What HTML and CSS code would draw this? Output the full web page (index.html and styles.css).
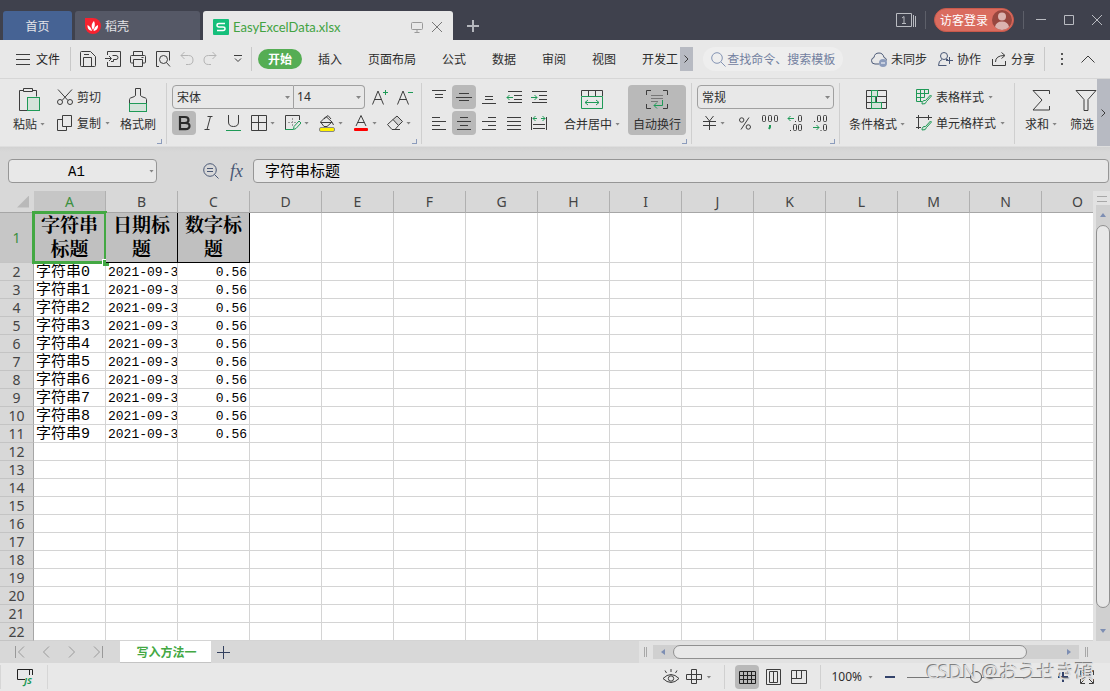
FILE: index.html
```html
<!DOCTYPE html>
<html lang="zh-CN">
<head>
<meta charset="utf-8">
<title>EasyExcelData.xlsx</title>
<link rel="stylesheet" href="styles.css">
</head>
<body>
<header class="titlebar">
  <nav class="doc-tabs">
    <button class="doc-tab home">首页</button>
    <button class="doc-tab docer">
      <svg width="16" height="16" viewBox="0 0 16 16"><path d="M0 0h8a8 8 0 1 1-8 8z" fill="#f8222f"/><path d="M7 13C2.500 12 2.500 9 2.500 7c2 1 4 3 4.500 6zM8 12C5.500 8 7 5 9 3c1.500 3 1 6-1 9zM8.500 13c.5-3 2-5 4.500-6 .3 3-1 5.500-4.500 6z" fill="#fff"/></svg>
      <span>稻壳</span>
    </button>
    <div class="doc-tab active">
      <svg width="16" height="16" viewBox="0 0 16 16"><rect width="16" height="16" rx="1" fill="#15bf7b"/><path d="M12 4.500H6Q4 4.500 4 6.200T6 8h4q2 0 2 1.700t-2 1.800H4" fill="none" stroke="#fff" stroke-width="1.500"/></svg>
      <span class="doc-name">EasyExcelData.xlsx</span>
      <button class="plain" aria-label="显示"><svg width="12" height="12" viewBox="0 0 12 12" class="line muted"><path d="M1.500 1.500h9q1 0 1 1v5q0 1-1 1h-9q-1 0-1-1v-5q0-1 1-1zM6 9v2M3.500 11.500h5"/></svg></button>
      <button class="plain" aria-label="关闭标签"><svg width="12" height="12" viewBox="0 0 12 12" class="line gray"><path d="M1 1l10 10M11 1L1 11"/></svg></button>
    </div>
    <button class="new-doc" aria-label="新建"><svg width="12" height="12" viewBox="0 0 12 12"><path d="M6 0v12M0 6h12" stroke="#b5b7bd" stroke-width="2"/></svg></button>
  </nav>
  <div class="window-tools">
    <button class="plain" aria-label="窗口"><svg width="20" height="14" viewBox="0 0 20 14" class="line light"><path d="M.5.5h15v13H.5zM17.500 2v12M19.500 3v11M6 5l2-1.500v7M6 10.500h4"/></svg></button>
    <i class="title-sep"></i>
    <button class="login"><span>访客登录</span><svg width="20" height="20" viewBox="0 0 20 20"><circle cx="10" cy="10" r="10" fill="#98473f"/><circle cx="10" cy="6.500" r="4" fill="#dbb3af"/><path d="M3 17q1-5.500 7-5.500T17 17q-3 3-7 3t-7-3z" fill="#dbb3af"/></svg></button>
    <i class="title-sep"></i>
    <button class="plain win" aria-label="最小化"><svg width="10" height="10" viewBox="0 0 10 10" class="line light"><path d="M0 4.500h10"/></svg></button>
    <button class="plain win" aria-label="最大化"><svg width="10" height="10" viewBox="0 0 10 10" class="line light"><path d="M.5.5h9v9h-9z"/></svg></button>
    <button class="plain win" aria-label="关闭"><svg width="10" height="10" viewBox="0 0 10 10" class="line light"><path d="M0 0l10 10M10 0L0 10"/></svg></button>
  </div>
</header>

<div class="menubar">
  <button class="plain file"><svg width="14" height="11" viewBox="0 0 14 11" class="line"><path d="M0 .5h14M0 5.500h14M0 10.500h14"/></svg><span>文件</span></button>
  <i class="menu-sep"></i>
  <div class="quick">
    <button class="plain" aria-label="保存"><svg width="16" height="16" viewBox="0 0 16 16" class="line"><path d="M1.500.5h9l5 5v9q0 1-1 1h-13q-1 0-1-1v-13q0-1 1-1zM3.500 15V6.500h8V15M4 3.500h5"/></svg></button>
    <button class="plain" aria-label="输出为PDF"><svg width="16" height="16" viewBox="0 0 16 16" class="line"><path d="M2.500 4V.5h13v15h-13V11M0 7.500h6M4 5l2.500 2.500L4 10M7.500 4.500h3.500q2 0 2 2t-2 2H8.500v2H6"/></svg></button>
    <button class="plain" aria-label="打印"><svg width="16" height="16" viewBox="0 0 16 16" class="line"><path d="M3.500 4V.5h9V4M3.500 12h-2q-1 0-1-1V5.500q0-1 1-1h13q1 0 1 1V11q0 1-1 1h-2M3.500 8.500h9v7h-9zM11.500 6.500h2"/></svg></button>
    <button class="plain" aria-label="打印预览"><svg width="16" height="16" viewBox="0 0 16 16" class="line"><path d="M4 15.500H1.500V.5h13v9"/><circle cx="8.500" cy="8.500" r="4"/><path d="M11.500 11.500l3.500 4"/></svg></button>
    <button class="plain" aria-label="撤销"><svg width="14" height="16" viewBox="0 0 14 16" class="line pale"><path d="M4.500 1L1 4.500 4.500 8M1 4.500h7.500q4.500 0 4.500 4.500t-4.500 4.500H6"/></svg></button>
    <button class="plain" aria-label="恢复"><svg width="14" height="16" viewBox="0 0 14 16" class="line pale"><path d="M9.500 1L13 4.500 9.500 8M13 4.500H5.500Q1 4.500 1 9t4.500 4.500H8"/></svg></button>
    <button class="plain more" aria-label="更多"><svg width="8" height="8" viewBox="0 0 8 8" class="line"><path d="M0 .5h8M1 3.500l3 3 3-3"/></svg></button>
  </div>
  <i class="menu-sep"></i>
  <nav class="tabs">
    <button class="plain start">开始</button>
    <button class="plain">插入</button>
    <button class="plain">页面布局</button>
    <button class="plain">公式</button>
    <button class="plain">数据</button>
    <button class="plain">审阅</button>
    <button class="plain">视图</button>
    <button class="plain">开发工</button>
  </nav>
  <button class="tab-next" aria-label="更多选项卡"><svg width="5" height="8" viewBox="0 0 5 8" class="line"><path d="M.5.5L4 4 .5 7.500"/></svg></button>
  <label class="search"><svg width="15" height="15" viewBox="0 0 15 15" class="line blue"><circle cx="6" cy="6" r="5.300"/><path d="M10 10l4.500 4.500"/></svg><input type="text" aria-label="搜索" placeholder="查找命令、搜索模板"></label>
  <div class="account">
    <button class="plain"><svg width="16" height="16" viewBox="0 0 16 16" class="line slate"><path d="M8 13H4Q.5 13 .5 9.700.5 7 3 6.500 3.500 2 8 2q4 0 5 4.500 2.500.5 2.500 3"/><circle cx="12" cy="12" r="4" fill="#8c9cbc" stroke="none"/><path d="M10 12h4" stroke="#fff"/></svg><span>未同步</span></button>
    <button class="plain"><svg width="15" height="14" viewBox="0 0 15 14" class="line slate"><circle cx="6" cy="4" r="3.500"/><path d="M4 7.500Q.5 8.500.5 13.500H8.500M8 7.500h2M11.500 5v7M8 8.500h7"/></svg><span>协作</span></button>
    <button class="plain"><svg width="15" height="14" viewBox="0 0 15 14" class="line"><path d="M.5 7v6.500h13V9M3.500 10q0-6.500 9-6.500M9.500.5l3.500 3-3.500 3"/></svg><span>分享</span></button>
  </div>
  <i class="menu-sep"></i>
  <button class="plain dots" aria-label="菜单"><svg width="2" height="12" viewBox="0 0 2 12"><path d="M0 0h2v2H0zM0 5h2v2H0zM0 10h2v2H0z" fill="#555"/></svg></button>
  <button class="plain fold" aria-label="折叠"><svg width="14" height="8" viewBox="0 0 14 8" class="line"><path d="M.5 7.500L7 1l6.500 6.500"/></svg></button>
</div>

<div class="ribbon">
  <div class="groups">
    <section class="group clipboard">
      <button class="big"><svg width="24" height="24" viewBox="0 0 24 24" class="line"><path d="M6.500 2.500h-4v20h9M15.500 2.500h4v6M6.500.5h9v3h-9z"/><rect x="10.500" y="9.500" width="12" height="13" fill="#d5e3da" stroke="#1f9a57"/></svg><span class="label">粘贴<i class="caret"></i></span></button>
      <div class="stack">
        <button class="small"><svg width="16" height="16" viewBox="0 0 16 16" class="line"><path d="M1 .5l10 11M15 .5l-10 11"/><circle cx="3" cy="13" r="2.500"/><circle cx="13" cy="13" r="2.500"/></svg><span>剪切</span></button>
        <button class="small"><svg width="16" height="16" viewBox="0 0 16 16" class="line"><path d="M5.500.5h9v11h-9zM5.500 4.500h-5v11h9v-4"/></svg><span>复制</span><i class="caret"></i></button>
      </div>
      <button class="big"><svg width="20" height="24" viewBox="0 0 20 24" class="line"><path d="M1.500 15.500V11.500q0-1 1-1.500l4-1.500q1-.5 1-1.500V.5h5V7q0 1 1 1.500l4 1.500q1 .5 1 1.500v4"/><rect x="1.500" y="15.500" width="17" height="8" fill="#d5e3da" stroke="#1f9a57"/></svg><span class="label">格式刷</span></button>
      <i class="corner"></i>
    </section>
    <section class="group font">
      <div class="stack">
        <div class="row">
          <span class="combo name"><select aria-label="字体"><option>宋体</option></select></span>
          <span class="combo size"><select aria-label="字号"><option>14</option></select></span>
          <button class="tool grow" aria-label="增大字号"><svg width="16" height="16" viewBox="0 0 16 16" class="line"><path d="M.5 15.500L6 2l5.500 13.500M2.500 10.500h7"/><path d="M13.500 1v5M11 3.500h5" stroke="#1f9a57"/></svg></button>
          <button class="tool" aria-label="减小字号"><svg width="16" height="16" viewBox="0 0 16 16" class="line"><path d="M.5 15.500L6 2l5.500 13.500M2.500 10.500h7"/><path d="M11 3.500h5" stroke="#1f9a57"/></svg></button>
        </div>
        <div class="row">
          <button class="tool on" aria-label="加粗"><svg width="14" height="16" viewBox="0 0 14 16"><path d="M3 2h5q3.500 0 3.500 3T8 8H3zM3 8h5.500q4 0 4 3t-4 3.200H3z" fill="none" stroke="#2b2b2b" stroke-width="2.200"/></svg></button>
          <button class="tool" aria-label="倾斜"><svg width="10" height="16" viewBox="0 0 10 16" class="line"><path d="M3.500 1.500h5M.5 14.500h5M6.500 1.500l-3.500 13"/></svg></button>
          <button class="tool" aria-label="下划线"><svg width="16" height="16" viewBox="0 0 16 16" class="line"><path d="M2.500 0v7q0 4.500 5 4.500t5-4.500V0"/><path d="M0 15.500h15" stroke="#1f9a57"/></svg></button>
          <button class="split" aria-label="边框"><svg width="16" height="16" viewBox="0 0 16 16" class="line"><path d="M.5.5h15v15H.5zM7.500.5v15M.5 7.500h15"/></svg><i class="caret"></i></button>
          <button class="split" aria-label="绘图边框"><svg width="16" height="16" viewBox="0 0 16 16" class="line"><path d="M.5 15V.5h14V5"/><path d="M3 7.500h9M7.500 3v9" stroke="#999" stroke-dasharray="2 1"/><path d="M0 14.500h8M8.500 14.500l.5-3L14 6l2 2-5 5.500z" stroke="#1f9a57"/></svg><i class="caret"></i></button>
          <button class="split" aria-label="填充颜色"><svg width="16" height="17" viewBox="0 0 16 17" class="line"><path d="M1.500 7L7 1.500l6 5.500-5 4.500H5zM5 4L9 .5l3 3.500M1.500 7.500h11M13 7l1.500 3"/><rect x="0.500" y="12.500" width="15" height="4" rx="1.500" fill="#fff200" stroke="#888"/></svg><i class="caret"></i></button>
          <button class="split" aria-label="字体颜色"><svg width="16" height="17" viewBox="0 0 16 17" class="line"><path d="M3 11L8 .5l5 10.500M4.500 7.500h7"/><rect x="1" y="13" width="14" height="3" rx="1" fill="#f00" stroke="none"/></svg><i class="caret"></i></button>
          <button class="split" aria-label="清除"><svg width="16" height="16" viewBox="0 0 16 16" class="line"><path d="M6 4.500l4-3.500 5.500 5.500-4 4z" fill="#d0d0d0"/><path d="M6 4.500L.5 9.500l4.500 5h3l3.500-4M5 14.500h8"/></svg><i class="caret"></i></button>
        </div>
      </div>
      <i class="corner"></i>
    </section>
    <section class="group align">
      <div class="stack">
        <div class="row">
          <button class="tool" aria-label="顶端对齐"><svg width="14" height="16" viewBox="0 0 14 16" class="line"><path d="M0 1.500h14M3 5.500h8M3 8.500h8"/></svg></button>
          <button class="tool on" aria-label="垂直居中"><svg width="16" height="16" viewBox="0 0 16 16" class="line"><path d="M3 4.500h10M0 8.500h16M3 11.500h10"/></svg></button>
          <button class="tool" aria-label="底端对齐"><svg width="14" height="16" viewBox="0 0 14 16" class="line"><path d="M3 7.500h8M3 10.500h8M0 14.500h14"/></svg></button>
          <button class="tool" aria-label="减少缩进"><svg width="16" height="16" viewBox="0 0 16 16" class="line"><path d="M2 2.500h14M8 6.500h8M8 10.500h8M2 13.500h14"/><path d="M7 8.500H1M3.500 6L1 8.500 3.500 11" stroke="#1f9a57"/></svg></button>
          <button class="tool" aria-label="增加缩进"><svg width="16" height="16" viewBox="0 0 16 16" class="line"><path d="M1 2.500h15M8 6.500h8M8 10.500h8M1 13.500h15"/><path d="M0 8.500h6M3.500 6L6 8.500 3.500 11" stroke="#1f9a57"/></svg></button>
        </div>
        <div class="row">
          <button class="tool" aria-label="左对齐"><svg width="14" height="14" viewBox="0 0 14 14" class="line"><path d="M0 1.500h8M0 5.500h14M0 9.500h8M0 13.500h14"/></svg></button>
          <button class="tool on" aria-label="水平居中"><svg width="14" height="14" viewBox="0 0 14 14" class="line"><path d="M3 1.500h8M0 5.500h14M3 9.500h8M0 13.500h14"/></svg></button>
          <button class="tool" aria-label="右对齐"><svg width="14" height="14" viewBox="0 0 14 14" class="line"><path d="M6 1.500h8M0 5.500h14M6 9.500h8M0 13.500h14"/></svg></button>
          <button class="tool" aria-label="两端对齐"><svg width="14" height="14" viewBox="0 0 14 14" class="line"><path d="M0 1.500h14M0 5.500h14M0 9.500h14M0 13.500h14"/></svg></button>
          <button class="tool" aria-label="分散对齐"><svg width="16" height="16" viewBox="0 0 16 16" class="line"><path d="M.5 2v13M15.500 2v13M2 9.500h12M2 13.500h12"/><path d="M2 3.500h4M4.500 1L2 3.500 4.500 6M10 3.500h4M11.500 1L14 3.500 11.500 6" stroke="#1f9a57"/></svg></button>
        </div>
      </div>
      <button class="big merge"><svg width="22" height="20" viewBox="0 0 22 20" class="line"><path d="M.5 6V.5h21V6M7.500 1v5M14.500 1v5"/><path d="M.5 6.500h21v12H.5zM4 12.500h14M7 10l-3 2.500L7 15M15 10l3 2.500-3 2.500" stroke="#1f9a57"/></svg><span class="label">合并居中<i class="caret"></i></span></button>
      <button class="big wrap"><svg width="22" height="20" viewBox="0 0 22 20" class="line"><path d="M.5 5V.5H5M17 .5h4.500V5M.5 14v4.500H5M17 18.500h4.500V14"/><path d="M5 5.500h12M5 8.500h12M5 11.500h7" stroke="#777"/><path d="M16.500 10v5.500H8M11 12.500l-3 3 3 3" stroke="#1f9a57"/></svg><span class="label">自动换行</span></button>
      <i class="corner"></i>
    </section>
    <section class="group number">
      <div class="stack">
        <span class="combo format"><select aria-label="数字格式"><option>常规</option></select></span>
        <div class="row formats">
          <button class="split" aria-label="货币"><svg width="15" height="14" viewBox="0 0 15 14" class="line"><path d="M3.500 0l4 5 4-5M1 5.500h13M1 9.500h13M7.500 5v9"/></svg><i class="caret"></i></button>
          <button class="tool" aria-label="百分比"><svg width="12" height="13" viewBox="0 0 12 13" class="line"><circle cx="2.700" cy="3" r="2.200"/><circle cx="9.300" cy="10" r="2.200"/><path d="M10 .5L2 12.500"/></svg></button>
          <button class="tool" aria-label="千位分隔"><svg width="16" height="16" viewBox="0 0 16 16" class="line"><rect x=".5" y=".5" width="3" height="6" rx="1"/><rect x="6.500" y=".5" width="3" height="6" rx="1"/><rect x="12.500" y=".5" width="3" height="6" rx="1"/><path d="M8 10v2l-1 2" stroke="#1f9a57" stroke-width="2"/></svg></button>
          <button class="tool" aria-label="增加小数"><svg width="16" height="16" viewBox="0 0 16 16" class="line"><path d="M7 3.500H1M3.500 1L1 3.500 3.500 6" stroke="#1f9a57"/><rect x="11.500" y=".5" width="3" height="6" rx="1"/><rect x="6.500" y="9.500" width="3" height="6" rx="1"/><rect x="11.500" y="9.500" width="3" height="6" rx="1"/><path d="M8 6.500h1M3 15.500h1"/></svg></button>
          <button class="tool" aria-label="减少小数"><svg width="16" height="16" viewBox="0 0 16 16" class="line"><rect x="5.500" y=".5" width="3" height="6" rx="1"/><rect x="11.500" y=".5" width="3" height="6" rx="1"/><rect x="11.500" y="9.500" width="3" height="6" rx="1"/><path d="M2 6.500h1M8.500 15.500h1"/><path d="M1 12.500h6M4.500 10L7 12.500 4.500 15" stroke="#1f9a57"/></svg></button>
        </div>
      </div>
      <i class="corner"></i>
    </section>
    <section class="group styles">
      <button class="big"><svg width="22" height="20" viewBox="0 0 22 20" class="line"><path d="M.5.5h20v18H.5zM.5 6.500h20M.5 12.500h20M10.500.5v18"/><path d="M5.500 0v19M5.500.5h6v6h-6zM5.500 6.500h4v6h-4zM5.500 12.500h10v6h-10z" fill="#d5e3da" stroke="#1f9a57"/></svg><span class="label">条件格式<i class="caret"></i></span></button>
      <div class="stack">
        <button class="small"><svg width="16" height="16" viewBox="0 0 16 16" class="line"><path d="M12.500 4V.5"/><path d="M6 12.500H.5V.5h12V5M.5 4.500h12M.5 8.500h8M4.500.5v12M8.500.5v8M6 15q0-4 3.500-3.500L14.500 6l1 1-5 5.500Q10 15.500 6 15z" stroke="#1f9a57"/></svg><span>表格样式</span><i class="caret"></i></button>
        <button class="small"><svg width="16" height="16" viewBox="0 0 16 16" class="line"><path d="M0 2.500h16M2.500 0v14M12.500 0v5M0 12.500h5"/><path d="M6 15q0-4 3.500-3.500L14.500 6l1 1-5 5.500Q10 15.500 6 15z" fill="#d5e3da" stroke="#1f9a57"/></svg><span>单元格样式</span><i class="caret"></i></button>
      </div>
    </section>
    <section class="group edit">
      <button class="big"><svg width="18" height="21" viewBox="0 0 18 21" class="line"><path d="M17.500 4V.5H1l9 9.500-9 10h16.500V16"/></svg><span class="label">求和<i class="caret"></i></span></button>
      <button class="big"><svg width="22" height="21" viewBox="0 0 22 21" class="line"><path d="M1 .5h20l-8 9v11H9v-11z"/></svg><span class="label">筛选<i class="caret"></i></span></button>
    </section>
  </div>
  <button class="ribbon-next" aria-label="更多工具"><svg width="5" height="8" viewBox="0 0 5 8" class="line"><path d="M.5.5L4 4 .5 7.500"/></svg></button>
</div>

<div class="formula-bar">
  <span class="name-box"><input type="text" value="A1" aria-label="名称框"><i class="caret"></i></span>
  <div class="fx">
    <button class="plain" aria-label="查找"><svg width="16" height="16" viewBox="0 0 16 16" class="line slate"><circle cx="7" cy="7" r="6.300"/><path d="M11.500 11.500l4 4M4 5.500h6M4 8.500h6"/></svg></button>
    <button class="plain fx-label">fx</button>
  </div>
  <input class="formula" type="text" value="字符串标题" aria-label="编辑栏">
</div>

<main class="sheet">
  <div class="grid-view">
    <table class="grid" id="grid"></table>
  </div>
  <div class="vscroll">
    <i class="split-handle"></i>
    <div class="vtrack">
      <button class="plain" aria-label="向上"><i class="tri up"></i></button>
      <div class="vthumb"></div>
      <button class="plain" aria-label="向下"><i class="tri down"></i></button>
    </div>
  </div>
</main>

<div class="sheet-bar">
  <div class="sheet-nav">
    <button class="plain" aria-label="第一个"><svg width="10" height="12" viewBox="0 0 10 12" class="line muted"><path d="M.5 0v12M9 .5L3.500 6 9 11.500"/></svg></button>
    <button class="plain" aria-label="上一个"><svg width="10" height="12" viewBox="0 0 10 12" class="line muted"><path d="M8 .5L2.500 6 8 11.500"/></svg></button>
    <button class="plain" aria-label="下一个"><svg width="10" height="12" viewBox="0 0 10 12" class="line muted"><path d="M2 .5L7.500 6 2 11.500"/></svg></button>
    <button class="plain" aria-label="最后一个"><svg width="10" height="12" viewBox="0 0 10 12" class="line muted"><path d="M1 .5L6.500 6 1 11.500M9.500 0v12"/></svg></button>
  </div>
  <button class="sheet-tab">写入方法一</button>
  <button class="plain add-sheet" aria-label="新建工作表"><svg width="13" height="13" viewBox="0 0 13 13" class="line navy"><path d="M6.500 0v13M0 6.500h13"/></svg></button>
  <div class="hscroll">
    <i class="grip"></i>
    <div class="htrack">
      <button class="plain" aria-label="向左"><i class="tri left"></i></button>
      <div class="hthumb"></div>
      <button class="plain end" aria-label="向右"><i class="tri right"></i></button>
    </div>
    <i class="grip"></i>
  </div>
</div>

<footer class="status">
  <button class="plain macro"><svg width="17" height="12" viewBox="0 0 17 12" class="line"><path d="M8 10.500H.5V.5h13M12.500 6V.5h3V6" stroke="#222"/></svg><span>JS</span></button>
  <div class="views">
    <button class="plain" aria-label="护眼模式"><svg width="16" height="16" viewBox="0 0 16 16" class="line"><path d="M0 9.500Q8 1.500 16 9.500 8 17.500 0 9.500zM8 3V0M3.500 4L2 1.500M12.500 4L14 1.500"/><circle cx="8" cy="9.500" r="2.700"/></svg></button>
    <button class="plain reading" aria-label="阅读模式"><svg width="16" height="16" viewBox="0 0 16 16" class="line"><path d="M5.500.5h5v14h-5zM.5 5.500h15v5H.5z"/></svg><i class="caret"></i></button>
    <i class="status-sep"></i>
    <button class="tool on" aria-label="普通视图"><svg width="17" height="13" viewBox="0 0 17 13" class="line"><path d="M.5.5h16v12H.5zM.5 4.500h16M.5 8.500h16M4.500.5v12M8.500.5v12M12.500.5v12" stroke="#222"/></svg></button>
    <button class="plain view" aria-label="页面布局视图"><svg width="15" height="16" viewBox="0 0 15 16" class="line"><path d="M.5.5h14v15H.5zM3.500 2.500h8v11h-8zM7.500 2.500v11"/></svg></button>
    <button class="plain view" aria-label="分页预览"><svg width="16" height="14" viewBox="0 0 16 14" class="line"><path d="M.5.5h15v13H.5zM5.500.5v8M.5 8.500h10v-8"/></svg></button>
    <i class="status-sep"></i>
    <button class="plain zoom-value">100%<i class="caret"></i></button>
    <button class="plain" aria-label="缩小"><svg width="10" height="10" viewBox="0 0 10 10"><path d="M0 5h10" stroke="#33436b" stroke-width="2"/></svg></button>
    <input class="zoom" type="range" min="0" max="100" value="48" aria-label="缩放">
    <button class="plain" aria-label="放大"><svg width="12" height="12" viewBox="0 0 12 12"><path d="M6 1v10M1 6h10" stroke="#33436b" stroke-width="2"/></svg></button>
    <button class="plain full" aria-label="全屏"><svg width="14" height="14" viewBox="0 0 14 14" class="line"><path d="M.5 5V.5H5M9 .5h4.500V5M.5 9v4.500H5M9 13.500h4.500V9M1 1l4 4M13 1L9 5M1 13l4-4M13 13L9 9"/></svg></button>
  </div>
  <span class="watermark">CSDN @おうせき碩</span>
</footer>
<script src="script.js"></script>
</body>
</html>
```
FILE: styles.css
```css
* { box-sizing: border-box; }
body {
  margin: 0;
  min-height: 100vh;
  display: flex;
  flex-direction: column;
  background: #d8d8d8;
  color: #2e2e2e;
  font: 12px/18px "Noto Sans CJK SC", "Noto Sans", sans-serif;
  overflow: hidden;
}
button, input, select { font: inherit; color: inherit; margin: 0; padding: 0; }
button { background: none; border: 0; white-space: nowrap; }
svg { display: block; flex: none; }
.plain, .small, .split, .tool { display: flex; align-items: center; justify-content: center; flex: none; }

.line { fill: none; stroke: #3d3d3d; stroke-width: 1; }
.line.muted { stroke: #999; }
.line.gray { stroke: #777; }
.line.light { stroke: #b9bbc1; }
.line.pale { stroke: #b4b4b4; }
.line.blue { stroke: #8494b4; }
.line.slate { stroke: #4a5876; }
.line.navy { stroke: #33405e; }
.caret { flex: none; width: 5px; height: 3px; background: #858585; clip-path: polygon(0 0, 100% 0, 50% 100%); }

/* Title bar */
.titlebar { height: 40px; background: #3f414d; display: flex; justify-content: space-between; }
.doc-tabs { display: flex; align-items: flex-end; gap: 3px; padding-left: 3px; }
.doc-tab { height: 29px; border-radius: 3px 3px 0 0; display: flex; align-items: center; color: #e4e4e8; }
.home { width: 69px; justify-content: center; background: #466394; }
.docer { width: 125px; padding-left: 10px; gap: 4px; background: #555866; }
.doc-tab.active { width: 250px; padding: 2px 10px 0 10px; background: #e8e8e8; color: #42a342; }
.doc-name { flex: 1; padding-left: 4px; font: 13px/18px Lato, "Noto Sans", sans-serif; text-align: left; }
.active .plain + .plain { margin-left: 8px; }
.new-doc { height: 28px; padding-left: 11px; display: flex; align-items: center; }
.window-tools { display: flex; align-items: center; padding-right: 8px; }
.title-sep { width: 1px; height: 18px; margin: 0 8px 0 9px; background: #5d5f69; }
.login { height: 24px; padding: 0 1px 0 5px; border: 1px solid #c9594b; border-radius: 12px; background: #da6c5f; color: #fff; display: flex; align-items: center; gap: 4px; }
.win { margin-left: 4px; }
.win + .win { margin-left: 18px; }

/* Menu row */
.menubar { height: 39px; background: #e8e8e8; border-bottom: 1px solid #d6d6d6; display: flex; align-items: center; padding: 0 15px 0 16px; }
.file { gap: 6px; color: #222; }
.menu-sep { width: 1px; height: 24px; margin: 0 9px; background: #c8c8c8; flex: none; }
.file + .menu-sep { margin-left: 10px; }
.quick { display: flex; align-items: center; gap: 9px; }
.more { padding: 0 0 0 8px; }
.quick + .menu-sep { margin: 0 6px 0 9px; }
.tabs { display: flex; align-items: center; gap: 26px; }
.start { width: 44px; height: 20px; margin-right: -10px; border-radius: 10px; background: #55ad54; color: #fff; font-weight: 700; }
.tab-next { width: 13px; height: 24px; margin-left: 2px; background: #b7bac2; display: grid; place-items: center; flex: none; }
.search { height: 24px; width: 140px; margin: 0 auto 0 10px; padding: 0 8px; border-radius: 12px; background: #eeeeee; display: flex; align-items: center; gap: 1px; }
.search input { flex: 1; min-width: 0; border: 0; background: none; }
.search input::placeholder { color: #72809f; opacity: 1; }
.account { display: flex; gap: 11px; }
.account .plain { gap: 4px; }
.dots { padding: 0 18px 0 7px; }

/* Ribbon */
.ribbon { height: 68px; background: #e8e8e8; display: flex; border-bottom: 1px solid #dedede; }
.groups { flex: 1; min-width: 0; display: flex; overflow: hidden; padding: 4px 0 2px; }
.group { position: relative; flex: none; display: flex; align-items: flex-start; padding: 2px 4px 0 5px; border-right: 1px solid #cfcfcf; }
.stack { display: flex; flex-direction: column; gap: 2px; }
.row { display: flex; gap: 1px; }
.big { height: 50px; padding-top: 3px; display: grid; grid-template-rows: 24px 18px; row-gap: 3px; place-items: center; border-radius: 4px; }
.label { display: flex; align-items: center; gap: 3px; }
.small { height: 24px; gap: 4px; justify-content: flex-start; }
.tool { width: 24px; height: 24px; border-radius: 4px; }
.on, .wrap { background: #b9b9b9; }
.split { width: 34px; height: 24px; gap: 3px; justify-content: flex-start; padding-left: 4px; }
.corner { position: absolute; right: 4px; bottom: 0; width: 5px; height: 5px; border: solid #8c9cbc; border-width: 0 1px 1px 0; }
.clipboard { padding: 2px 10px 0 13px; }
.clipboard .stack { margin: 0 10px 0 12px; }
.combo { position: relative; display: block; height: 24px; border: 1px solid #a0a0a0; }
.combo::after { content: ""; position: absolute; right: 3px; top: 10px; width: 5px; height: 3px; background: #858585; clip-path: polygon(0 0, 100% 0, 50% 100%); }
.combo select { appearance: none; width: 100%; height: 22px; padding-left: 4px; border: 0; background: none; }
.name { width: 122px; border-radius: 4px 0 0 4px; }
.size { width: 71px; border-left: 0; border-radius: 0 4px 4px 0; margin-left: -1px; }
.size select { padding-left: 3px; font-family: "Noto Sans", sans-serif; }
.format { width: 137px; border-radius: 4px; }
.grow { margin-left: 2px; }
.font .row + .row .split + .split { margin-left: -1px; }
.merge { margin: 0 8px 0 13px; }
.wrap { width: 58px; }
.align, .number { padding-right: 5px; }
.formats { padding-left: 1px; }
.styles { padding: 2px 9px 0; }
.styles .stack { margin-left: 11px; }
.edit { padding: 2px 0 0 10px; gap: 13px; border: 0; }
.ribbon-next { width: 13px; background: #b7bac2; display: grid; place-items: center; flex: none; }

/* Formula bar */
.formula-bar { height: 44px; display: flex; align-items: center; padding: 4px 1px 0 8px; background: linear-gradient(#d2d2d2, #d8d8d8 5px); }
.name-box { width: 149px; height: 24px; padding-right: 2px; border: 1px solid #969696; border-radius: 4px; background: #e8e8e8; display: flex; align-items: center; }
.name-box input { flex: 1; min-width: 0; padding: 2px 5px 0 0; border: 0; background: none; text-align: center; font: 14px/20px "Liberation Mono", monospace; color: #000; }
.fx { width: 96px; display: flex; align-items: center; justify-content: flex-end; gap: 11px; padding-right: 10px; }
.fx-label { font: italic 18px/20px "Liberation Serif", serif; color: #4a5876; }
.formula { flex: 1; min-width: 0; height: 24px; padding: 0 11px 4px; border: 1px solid #969696; border-radius: 4px; background: #e8e8e8; font: 15px/18px "Noto Sans CJK SC", sans-serif; color: #000; }

/* Sheet */
.sheet { display: flex; }
.grid-view { flex: 1; min-width: 0; overflow: hidden; }
.grid { width: 1114px; table-layout: fixed; border-collapse: separate; border-spacing: 0; background: #fff; }
.grid th { padding: 0; background: #d8d8d8; font-weight: 400; font-size: 14px; font-family: "Noto Sans", sans-serif; color: #444; border: solid #a6a6a6; border-width: 0 1px 0 0; }
.grid thead th { height: 22px; line-height: 20px; border-width: 0 1px 1px 0; border-right-color: #b0b0b0; }
.grid tbody th { height: 18px; line-height: 17px; border-width: 0 1px 1px 0; border-bottom-color: #c4c4c4; }
.grid .head-col { width: 34px; }
.grid .all { border-right-color: #d8d8d8; }
.all i { display: block; width: 12px; height: 12px; margin-left: 17px; background: #b9b9b9; clip-path: polygon(100% 0, 100% 100%, 0 100%); }
.grid th.current { background: #c6c6c6; color: #3c9040; }
.grid td { padding: 0 2px; height: 18px; line-height: 14px; border: solid #d4d4d4; border-width: 0 1px 1px 0; overflow: hidden; white-space: nowrap; color: #000; }
.grid .title { position: relative; height: 50px; padding: 0; background: #c0c0c0; border-color: #000; white-space: normal; text-align: center; font: 700 19px/24px "Liberation Serif", "Noto Serif CJK SC", "Noto Sans CJK SC", serif; }
.grid .text, .grid .date, .grid .num { padding-top: 3px; font-family: "Liberation Mono", "Noto Sans CJK SC", monospace; }
.grid .text { font-size: 15px; }
.grid .date, .grid .num { font-size: 13px; }
.grid .num { text-align: right; }
.grid .selected { overflow: visible; }
.selected::before { content: ""; position: absolute; inset: -2px; border: 3px solid #43a843; }
.selected::after { content: ""; position: absolute; right: -4px; bottom: -4px; width: 6px; height: 6px; background: #43a843; border: solid #fff; border-width: 1px 0 0 1px; }

.vscroll { width: 17px; padding-left: 3px; background: #e2e2e2; display: flex; flex-direction: column; }
.split-handle { height: 14px; display: block; padding-top: 5px; }
.split-handle::before { content: ""; display: block; width: 10px; height: 4px; margin-left: 1px; border: solid #a8a8a8; border-width: 1px 0; }
.vtrack { flex: 1; background: #d0d0d0; display: flex; flex-direction: column; }
.vtrack .plain { height: 20px; }
.vthumb { flex: 1; margin-bottom: 13px; border: 1px solid #909090; border-radius: 7px; background: #e8e8e8; }
.tri { width: 6px; height: 4px; background: #7d8eb3; }
.up { clip-path: polygon(50% 0, 100% 100%, 0 100%); }
.down { clip-path: polygon(0 0, 100% 0, 50% 100%); }
.left { width: 4px; height: 6px; clip-path: polygon(100% 0, 100% 100%, 0 50%); }
.right { width: 4px; height: 6px; clip-path: polygon(0 0, 100% 50%, 0 100%); }

/* Sheet tabs */
.sheet-bar { height: 22px; display: flex; align-items: center; }
.sheet-nav { width: 120px; padding-left: 15px; display: flex; gap: 16px; }
.sheet-tab { width: 91px; height: 22px; padding-left: 2px; background: #fff; border-bottom: 1px solid #c4c4c4; color: #43a843; font-weight: 700; }
.add-sheet { padding-left: 6px; }
.hscroll { width: 471px; height: 22px; margin-left: auto; padding: 0 22px 0 5px; background: #e2e2e2; display: flex; align-items: center; justify-content: space-between; }
.grip { width: 3px; height: 10px; border: solid #a8a8a8; border-width: 0 1px; }
.htrack { width: 426px; height: 14px; background: #d0d0d0; display: flex; align-items: center; }
.htrack .plain { width: 20px; height: 14px; }
.hthumb { flex: 1; height: 14px; margin-right: 32px; border: 1px solid #909090; border-radius: 7px; background: #e8e8e8; }

/* Status bar */
.status { position: relative; height: 28px; background: #e8e8e8; display: flex; align-items: center; justify-content: space-between; padding-right: 16px; }
.macro { width: 48px; height: 24px; border: solid #d6d6d6; border-width: 0 1px; padding-left: 1px; }
.macro svg { margin-bottom: 5px; }
.macro span { margin-left: -10px; padding-top: 8px; color: #1f9a57; font: italic 700 9px/10px "Noto Sans", sans-serif; }
.views { display: flex; align-items: center; }
.reading { gap: 4px; padding-left: 7px; }
.status-sep { width: 1px; height: 24px; margin: 0 10px 0 13px; background: #d0d0d0; }
.view { width: 16px; margin-left: 6px; }
.view + .view { margin-left: 10px; }
.zoom-value { gap: 6px; margin-right: 12px; font-family: "Noto Sans", sans-serif; }
.zoom { appearance: none; width: 144px; height: 13px; margin: 0 6px 0 12px; background: linear-gradient(#777, #777) center / 100% 1px no-repeat; }
.zoom::-webkit-slider-thumb { appearance: none; width: 12px; height: 12px; border: 1px solid #555; border-radius: 50%; background: #e8e8e8; }
.full { margin-left: 11px; }
.watermark { position: absolute; right: 16px; bottom: 7px; font: 19px/24px "Noto Sans", "Noto Sans CJK JP", sans-serif; color: #dedede; text-shadow: -1px -1px 0 #808080; pointer-events: none; }
```
FILE: script.js
```javascript
const columns = [..."ABCDEFGHIJKLMNO"];
const titles = ["字符串标题", "日期标题", "数字标题"];
const grid = document.getElementById("grid");

function cell(row, col) {
  if (row === 1 && col < 3) {
    return `<td class="title${col === 0 ? " selected" : ""}">${titles[col]}</td>`;
  }
  if (row > 1 && row < 12 && col < 3) {
    return [
      `<td class="text">字符串${row - 2}</td>`,
      `<td class="date">2021-09-3</td>`,
      `<td class="num">0.56</td>`
    ][col];
  }
  return "<td></td>";
}

const head = columns.map((c, i) => `<th scope="col"${i === 0 ? ' class="current"' : ""}>${c}</th>`).join("");
let rows = "";
for (let r = 1; r <= 22; r++) {
  rows += `<tr><th scope="row"${r === 1 ? ' class="current"' : ""}>${r}</th>${columns.map((c, i) => cell(r, i)).join("")}</tr>`;
}
grid.innerHTML = `<thead><tr><th class="head-col all"><i></i></th>${head}</tr></thead><tbody>${rows}</tbody>`;
```
